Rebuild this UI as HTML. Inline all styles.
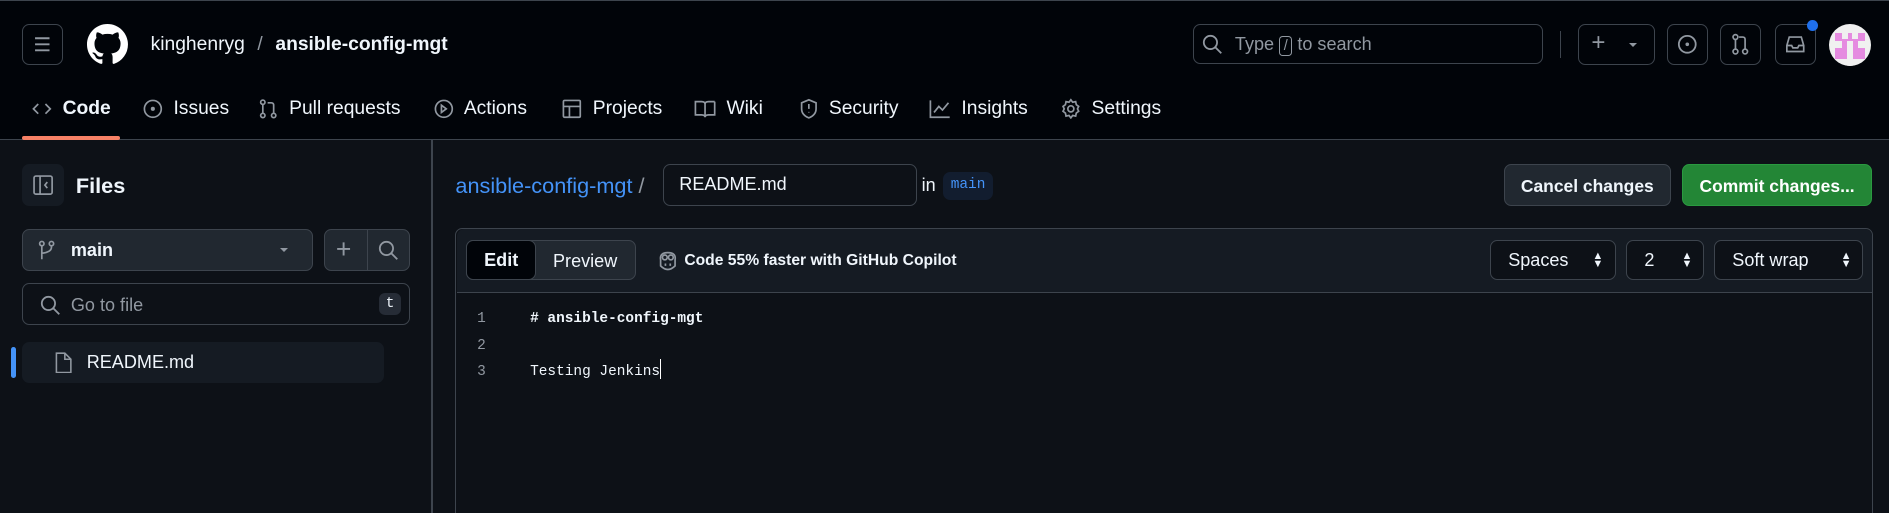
<!DOCTYPE html>
<html><head><meta charset="utf-8"><style>
html,body{margin:0;padding:0;background:#0d1117;overflow:hidden}
body{width:1889px;height:513px}
#r{zoom:1.2048;position:relative;width:1568px;height:426px;overflow:hidden;font-family:"Liberation Sans",sans-serif;color:#f0f6fc;font-size:14px}
.a{position:absolute}
.btn{position:absolute;border:1px solid #3d444d;border-radius:6px;box-sizing:border-box}
svg{display:block}
.nav{position:absolute;top:81px;font-size:16px;color:#f0f6fc;display:flex;align-items:center;gap:8px}
.nav svg{stroke:#9198a1;fill:none;stroke-width:1.4}
.mono{font-family:"Liberation Mono",monospace}
</style></head><body><div id="r">
<div class="a" style="left:0;top:0;width:1568px;height:116px;background:#010409;border-top:1px solid #3d444d;box-sizing:border-box;border-bottom:1px solid #3d444d"></div>
<div class="btn" style="left:18px;top:20px;width:34px;height:34px"><svg width="32" height="32"><path d="M10 11h12M10 16h12M10 21h12" stroke="#9198a1" stroke-width="1.6"/></svg></div>
<svg class="a" style="left:72px;top:20px" width="34" height="34" viewBox="0 0 16 16"><path fill="#fff" d="M8 0C3.58 0 0 3.58 0 8c0 3.54 2.29 6.530 5.47 7.59.4.07.55-.17.55-.38 0-.19-.01-.82-.01-1.49-2.01.37-2.53-.49-2.690-.94-.09-.23-.48-.94-.82-1.13-.28-.15-.68-.52-.01-.53.63-.01 1.08.58 1.23.82.72 1.21 1.87.87 2.33.66.07-.52.28-.87.51-1.07-1.78-.2-3.640-.89-3.640-3.95 0-.87.31-1.59.82-2.15-.08-.2-.36-1.02.08-2.12 0 0 .67-.21 2.2.82.64-.18 1.32-.27 2-.27.68 0 1.36.09 2 .27 1.53-1.04 2.2-.82 2.2-.82.44 1.1.16 1.92.08 2.12.51.56.82 1.27.82 2.15 0 3.07-1.87 3.75-3.65 3.95.29.25.54.73.54 1.48 0 1.07-.01 1.93-.01 2.2 0 .21.15.46.55.38A8.013 8.013 0 0016 8c0-4.42-3.58-8-8-8z"/></svg>
<div class="a" style="left:125px;top:28px;font-size:16px">kinghenryg <span style="color:#9198a1;margin:0 6px">/</span> <b>ansible-config-mgt</b></div>
<div class="btn" style="left:990px;top:20px;width:291px;height:33px"></div>
<svg class="a" style="left:998px;top:28px" width="18" height="18"><circle cx="7" cy="7" r="5.5" stroke="#9198a1" stroke-width="1.5" fill="none"/><path d="M11 11l5 5" stroke="#9198a1" stroke-width="1.5"/></svg>
<div class="a" style="left:1025px;top:28px;color:#9198a1;font-size:15px">Type <span style="display:inline-block;border:1px solid #9198a1;border-radius:3px;padding:0 3px;font-size:12px;line-height:15px">/</span> to search</div>
<div class="a" style="left:1295px;top:26px;width:1px;height:22px;background:#3d444d"></div>
<div class="btn" style="left:1310px;top:20px;width:64px;height:34px"><div class="a" style="left:10px;top:3px;font-size:20px;color:#9198a1">+</div><div class="a" style="left:41px;top:15px;border:4px solid transparent;border-top-color:#9198a1"></div></div>
<div class="btn" style="left:1384px;top:20px;width:34px;height:34px"><svg width="32" height="32"><circle cx="16" cy="16" r="7" stroke="#9198a1" stroke-width="1.5" fill="none"/><circle cx="16" cy="16" r="1.5" fill="#9198a1"/></svg></div>
<div class="btn" style="left:1428px;top:20px;width:34px;height:34px"><svg width="32" height="32" fill="none" stroke="#9198a1" stroke-width="1.4"><circle cx="12" cy="10" r="2"/><circle cx="12" cy="22" r="2"/><circle cx="20" cy="22" r="2"/><path d="M12 12v8M20 20v-8q0-2-2-2h-3"/></svg></div>
<div class="btn" style="left:1473px;top:20px;width:34px;height:34px"><svg width="32" height="32" fill="none" stroke="#9198a1" stroke-width="1.4"><path d="M9 17l2-7h10l2 7v5H9z M9 17h4l1 2h4l1-2h4"/></svg></div>
<div class="a" style="left:1500px;top:17px;width:9px;height:9px;border-radius:50%;background:#1f6feb"></div>
<div class="a" style="left:1518px;top:20px;width:35px;height:35px;border-radius:50%;background:#f0f0f0;overflow:hidden"><div class="a" style="left:5px;top:7px;width:25px;height:22px;background:#e58be0"></div><div class="a" style="left:11px;top:7px;width:5px;height:5px;background:#f0f0f0"></div><div class="a" style="left:19px;top:7px;width:5px;height:5px;background:#f0f0f0"></div><div class="a" style="left:15px;top:14px;width:5px;height:21px;background:#f0f0f0"></div><div class="a" style="left:5px;top:14px;width:6px;height:6px;background:#f0f0f0"></div><div class="a" style="left:24px;top:14px;width:6px;height:6px;background:#f0f0f0"></div></div>

<div class="nav" style="left:26px"><svg width="18" height="18"><path d="M6 5L2 9l4 4M12 5l4 4-4 4"/></svg><b>Code</b></div>
<div class="a" style="left:18px;top:113px;width:82px;height:3px;background:#f78166;border-radius:2px"></div>
<div class="nav" style="left:118px"><svg width="18" height="18"><circle cx="9" cy="9" r="7"/><circle cx="9" cy="9" r="1" fill="#9198a1"/></svg>Issues</div>
<div class="nav" style="left:214px"><svg width="18" height="18"><circle cx="4" cy="3.5" r="1.8"/><circle cx="4" cy="14.5" r="1.8"/><circle cx="13" cy="14.5" r="1.8"/><path d="M4 5.5v7M13 12.5V6q0-2-2-2H8"/></svg>Pull requests</div>
<div class="nav" style="left:359px"><svg width="18" height="18"><circle cx="9" cy="9" r="7"/><path d="M7 6l4 3-4 3z"/></svg>Actions</div>
<div class="nav" style="left:466px"><svg width="18" height="18"><rect x="2" y="2" width="14" height="14" rx="1"/><path d="M2 7h14M7 7v9"/></svg>Projects</div>
<div class="nav" style="left:575px"><svg width="20" height="18"><path d="M2 3h5q3 0 3 2v11q0-2-3-2H2zM18 3h-5q-3 0-3 2M18 3v11h-5q-3 0-3 2"/></svg>Wiki</div>
<div class="nav" style="left:662px"><svg width="18" height="18"><path d="M9 1.5l6 2.5v5q0 5-6 7.5Q3 14 3 9V4z M9 5v4M9 11.5v.5"/></svg>Security</div>
<div class="nav" style="left:770px"><svg width="20" height="18"><path d="M2 2v14h16M5 12l4-5 3 3 5-6"/></svg>Insights</div>
<div class="nav" style="left:880px"><svg width="18" height="18"><circle cx="9" cy="9" r="2.5"/><path d="M9 1.5l1.5 2 2.5-.5.5 2.5 2 1.5-1 2 1 2-2 1.5-.5 2.5-2.5-.5L9 16.5l-1.5-2-2.5.5-.5-2.5-2-1.5 1-2-1-2 2-1.5L5 3l2.5.5z"/></svg>Settings</div>

<div class="a" style="left:358px;top:116px;width:1px;height:310px;background:#3d444d"></div>
<div class="a" style="left:18px;top:136px;width:35px;height:35px;border-radius:6px;background:#151b23"><svg width="35" height="35" fill="none" stroke="#9198a1" stroke-width="1.4"><rect x="10" y="10" width="15" height="15" rx="1.5"/><path d="M15 10v15M21 15l-2 2.5 2 2.5"/></svg></div>
<div class="a" style="left:63px;top:144px;font-size:18px;font-weight:bold">Files</div>
<div class="btn" style="left:18px;top:190px;width:242px;height:35px;background:#212830"><svg class="a" style="left:12px;top:8px" width="16" height="18" fill="none" stroke="#9198a1" stroke-width="1.4"><circle cx="4" cy="3" r="1.8"/><circle cx="12" cy="3" r="1.8"/><path d="M4 5v11M12 5v1q0 4-8 5"/></svg><b class="a" style="left:40px;top:8px;font-size:15px">main</b><div class="a" style="left:214px;top:15px;border:4px solid transparent;border-top-color:#9198a1"></div></div>
<div class="btn" style="left:269px;top:190px;width:71px;height:35px;background:#212830"><div class="a" style="left:35px;top:0;width:1px;height:33px;background:#3d444d"></div><div class="a" style="left:9px;top:3px;font-size:22px;color:#9198a1">+</div><svg class="a" style="left:44px;top:8px" width="18" height="18"><circle cx="7" cy="7" r="5.5" stroke="#9198a1" stroke-width="1.5" fill="none"/><path d="M11 11l5 5" stroke="#9198a1" stroke-width="1.5"/></svg></div>
<div class="btn" style="left:18px;top:235px;width:322px;height:35px"><svg class="a" style="left:14px;top:9px" width="18" height="18"><circle cx="7" cy="7" r="5.5" stroke="#9198a1" stroke-width="1.5" fill="none"/><path d="M11 11l5 5" stroke="#9198a1" stroke-width="1.5"/></svg><div class="a" style="left:40px;top:9px;font-size:15px;color:#9198a1">Go to file</div><div class="a mono" style="left:296px;top:7px;width:18px;height:19px;background:#262c36;border-radius:5px;font-size:12px;text-align:center;line-height:19px">t</div></div>
<div class="a" style="left:9px;top:288px;width:4px;height:26px;background:#4493f8;border-radius:2px"></div>
<div class="a" style="left:18px;top:284px;width:301px;height:34px;background:#151b23;border-radius:6px"><svg class="a" style="left:27px;top:8px" width="16" height="18" fill="none" stroke="#9198a1" stroke-width="1.3"><path d="M2 1h7l5 5v11H2z M9 1v5h5"/></svg><div class="a" style="left:54px;top:8px;font-size:15px">README.md</div></div>

<div class="a" style="left:378px;top:144px;font-size:18px;color:#4493f8">ansible-config-mgt <span style="color:#9198a1">/</span></div>
<div class="btn" style="left:550px;top:136px;width:211px;height:35px;background:#0d1117"><div class="a" style="left:13px;top:8px;font-size:15px">README.md</div></div>
<div class="a" style="left:765px;top:145px;font-size:15px">in</div>
<div class="a mono" style="left:783px;top:143px;width:41px;height:23px;background:#121d2f;border-radius:6px;color:#4493f8;font-size:12px;text-align:center;line-height:23px">main</div>
<div class="btn" style="left:1248px;top:136px;width:139px;height:35px;background:#212830"><div style="text-align:center;line-height:35px;font-size:14.5px;font-weight:bold">Cancel changes</div></div>
<div class="btn" style="left:1396px;top:136px;width:158px;height:35px;background:#238636;border-color:#2a9a40"><div style="text-align:center;line-height:35px;font-size:14.5px;font-weight:bold;color:#fff">Commit changes...</div></div>

<div class="btn" style="left:378px;top:189px;width:1177px;height:250px;background:#0d1117"></div>
<div class="a" style="left:379px;top:190px;width:1175px;height:52px;background:#151b23;border-bottom:1px solid #3d444d;border-radius:6px 6px 0 0"></div>
<div class="btn" style="left:387px;top:199px;width:141px;height:33px;background:#212830"></div>
<div class="btn" style="left:387px;top:199px;width:58px;height:33px;background:#010409;border-color:#3d444d"><div style="text-align:center;line-height:33px;font-size:15px;font-weight:bold">Edit</div></div>
<div class="a" style="left:459px;top:208px;font-size:15px">Preview</div>
<svg class="a" style="left:545px;top:207px" width="18" height="18" fill="none" stroke="#9198a1" stroke-width="1.4"><path d="M3 9q-1-6 6-6t6 6v5q-3 3-6 3t-6-3z"/><circle cx="6.5" cy="7" r="2"/><circle cx="11.5" cy="7" r="2"/><path d="M7 12v2M11 12v2"/></svg>
<div class="a" style="left:568px;top:209px;font-size:13px;font-weight:bold">Code 55% faster with GitHub Copilot</div>
<div class="btn" style="left:1237px;top:199px;width:104px;height:33px;background:#0d1117"><div class="a" style="left:14px;top:8px;font-size:15px">Spaces</div><div class="a" style="left:84px;top:9px;font-size:9px;line-height:7px">▲<br>▼</div></div>
<div class="btn" style="left:1350px;top:199px;width:64px;height:33px;background:#0d1117"><div class="a" style="left:14px;top:8px;font-size:15px">2</div><div class="a" style="left:45px;top:9px;font-size:9px;line-height:7px">▲<br>▼</div></div>
<div class="btn" style="left:1423px;top:199px;width:123px;height:33px;background:#0d1117"><div class="a" style="left:14px;top:8px;font-size:15px">Soft wrap</div><div class="a" style="left:104px;top:9px;font-size:9px;line-height:7px">▲<br>▼</div></div>
<div class="a mono" style="left:396px;top:254px;font-size:12px;line-height:22px;color:#9198a1">1<br>2<br>3</div>
<div class="a mono" style="left:440px;top:254px;font-size:12px;line-height:22px"><b># ansible-config-mgt</b><br><br>Testing Jenkins<span style="display:inline-block;width:1px;height:16px;background:#fff;vertical-align:-3px"></span></div>
</div></body></html>
